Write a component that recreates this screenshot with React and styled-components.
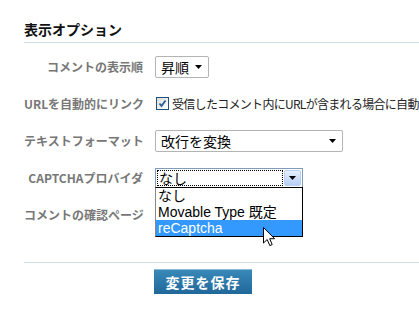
import styled, { createGlobalStyle } from 'styled-components';

const GlobalStyle = createGlobalStyle`
	html, body {
		margin: 0;
		padding: 0;
		background: #fff;
		overflow: hidden;
	}
	body {
		font-family: 'Noto Sans CJK JP', 'Liberation Sans', sans-serif;
	}
`;

const rows = [
	{ label: 'コメントの表示順', control: 'order' },
	{ label: 'URLを自動的にリンク', control: 'autolink' },
	{ label: 'テキストフォーマット', control: 'format' },
	{ label: 'CAPTCHAプロバイダ', control: 'captcha' },
	{ label: 'コメントの確認ページ', control: 'none' },
];

const captchaOptions = ['なし', 'Movable Type 既定', 'reCaptcha'];

const Arrow = () => (
	<svg width="7" height="4" viewBox="0 0 7 4">
		<path d="M0 0 H7 L3.5 4 Z" fill="#000" />
	</svg>
);

const Cursor = () => (
	<svg width="13" height="20" viewBox="0 0 13 20">
		<path
			d="M0.5 0.5 V16 L4.2 12.5 L6.8 18.6 L9.2 17.6 L6.7 11.7 H11.6 Z"
			fill="#fff"
			stroke="#000"
			strokeWidth="1"
			strokeLinejoin="round"
		/>
	</svg>
);

const renderControl = control => {
	if (control === 'order') {
		return (
			<Select $width={54}>
				<span>昇順</span>
				<Arrow />
			</Select>
		);
	}
	if (control === 'autolink') {
		return (
			<CheckLabel>
				<CheckBox>
					<svg width="9" height="9" viewBox="0 0 9 9">
						<path d="M1.5 4.5 L3.5 7 L7.5 1.5" fill="none" stroke="#2a5a9a" strokeWidth="1.8" />
					</svg>
				</CheckBox>
				<CheckText>受信したコメント内にURLが含まれる場合に自動的にリンクする</CheckText>
			</CheckLabel>
		);
	}
	if (control === 'format') {
		return (
			<Select $width={188}>
				<span>改行を変換</span>
				<Arrow />
			</Select>
		);
	}
	if (control === 'captcha') {
		return (
			<Combo>
				<OpenSelect>
					<FocusText>なし</FocusText>
					<DropButton>
						<Arrow />
					</DropButton>
				</OpenSelect>
				<OptionList>
					{captchaOptions.map((opt, i) => (
						<OptionItem key={opt} $active={i === 2}>
							{opt}
						</OptionItem>
					))}
				</OptionList>
				<CursorWrap>
					<Cursor />
				</CursorWrap>
			</Combo>
		);
	}
	return null;
};

const App = () => {
	return (
		<>
			<GlobalStyle />
			<Page>
				<Heading>表示オプション</Heading>
				<Form>
					{rows.map(row => (
						<Row key={row.label}>
							<Label>{row.label}</Label>
							<Field>{renderControl(row.control)}</Field>
						</Row>
					))}
				</Form>
				<Actions>
					<SaveButton>変更を保存</SaveButton>
				</Actions>
			</Page>
		</>
	);
};

export default App;

const Page = styled.div`
	width: 419px;
	height: 313px;
	padding-left: 24px;
	box-sizing: border-box;
	overflow: hidden;
`;

const Heading = styled.h2`
	margin: 19px 0 0;
	padding-bottom: 3px;
	font-size: 14px;
	line-height: 20px;
	font-weight: bold;
	color: #111;
	border-bottom: 1px solid #cfdde8;
`;

const Form = styled.div`
	padding-top: 5px;
	display: flex;
	flex-direction: column;
`;

const Row = styled.div`
	display: grid;
	grid-template-columns: 119px 1fr;
	column-gap: 12px;
	align-items: center;
	height: 37px;
`;

const Label = styled.div`
	text-align: right;
	font-size: 12px;
	font-weight: bold;
	color: #777;
	white-space: nowrap;
`;

const Field = styled.div`
	display: flex;
	align-items: center;
	white-space: nowrap;
	position: relative;
	overflow: visible;
`;

const Select = styled.div`
	width: ${p => p.$width}px;
	height: 22px;
	box-sizing: border-box;
	border: 1px solid #b4b4b4;
	border-radius: 2px;
	display: flex;
	align-items: center;
	justify-content: space-between;
	padding: 0 6px 0 5px;
	font-size: 14px;
	color: #000;
	background: #fff;
`;

const CheckLabel = styled.label`
	display: flex;
	align-items: center;
	gap: 3px;
	margin-left: 1px;
`;

const CheckText = styled.span`
	font-size: 12px;
	letter-spacing: -0.7px;
	color: #222;
`;

const CheckBox = styled.span`
	width: 11px;
	height: 11px;
	flex: none;
	border: 1px solid #1c5180;
	background: linear-gradient(135deg, #dcdcd7, #fff);
	display: flex;
	align-items: center;
	justify-content: center;
`;

const Combo = styled.div`
	position: relative;
	width: 148px;
	height: 20px;
`;

const OpenSelect = styled.div`
	width: 148px;
	height: 20px;
	box-sizing: border-box;
	border: 1px solid #7f9db9;
	display: flex;
	align-items: stretch;
	background: #fff;
	padding: 1px;
`;

const FocusText = styled.div`
	flex: 1;
	outline: 1px dotted #000;
	outline-offset: -1px;
	font-size: 14px;
	line-height: 16px;
	padding-left: 2px;
	color: #000;
`;

const DropButton = styled.div`
	width: 15px;
	margin-left: 1px;
	border: 1px solid #b9d0f5;
	border-radius: 2px;
	background: linear-gradient(#e6efff, #b7cff6);
	display: flex;
	align-items: center;
	justify-content: center;
`;

const OptionList = styled.ul`
	position: absolute;
	left: 0;
	top: 19px;
	width: 148px;
	box-sizing: border-box;
	margin: 0;
	padding: 0;
	list-style: none;
	background: #fff;
	border: 1px solid #000;
	border-left-color: #888;
	z-index: 2;
`;

const OptionItem = styled.li`
	height: 16px;
	line-height: 16px;
	font-size: 14px;
	font-family: 'Liberation Sans', 'Noto Sans CJK JP', sans-serif;
	padding-left: 2px;
	color: ${p => (p.$active ? '#fff' : '#000')};
	background: ${p => (p.$active ? '#3399ff' : '#fff')};
`;

const CursorWrap = styled.div`
	position: absolute;
	left: 108px;
	top: 59px;
	z-index: 3;
	line-height: 0;
`;

const Actions = styled.div`
	margin-top: 29px;
	border-top: 1px solid #cfdde8;
	padding: 6px 0 0 130px;
`;

const SaveButton = styled.button`
	width: 98px;
	height: 25px;
	border: none;
	border-top: 1px solid #8ab8d6;
	background: linear-gradient(#3889b8, #21679a);
	color: #fff;
	font-family: 'Noto Sans CJK JP', sans-serif;
	font-size: 14px;
	font-weight: bold;
	letter-spacing: 1px;
	padding: 0;
	cursor: pointer;
`;
